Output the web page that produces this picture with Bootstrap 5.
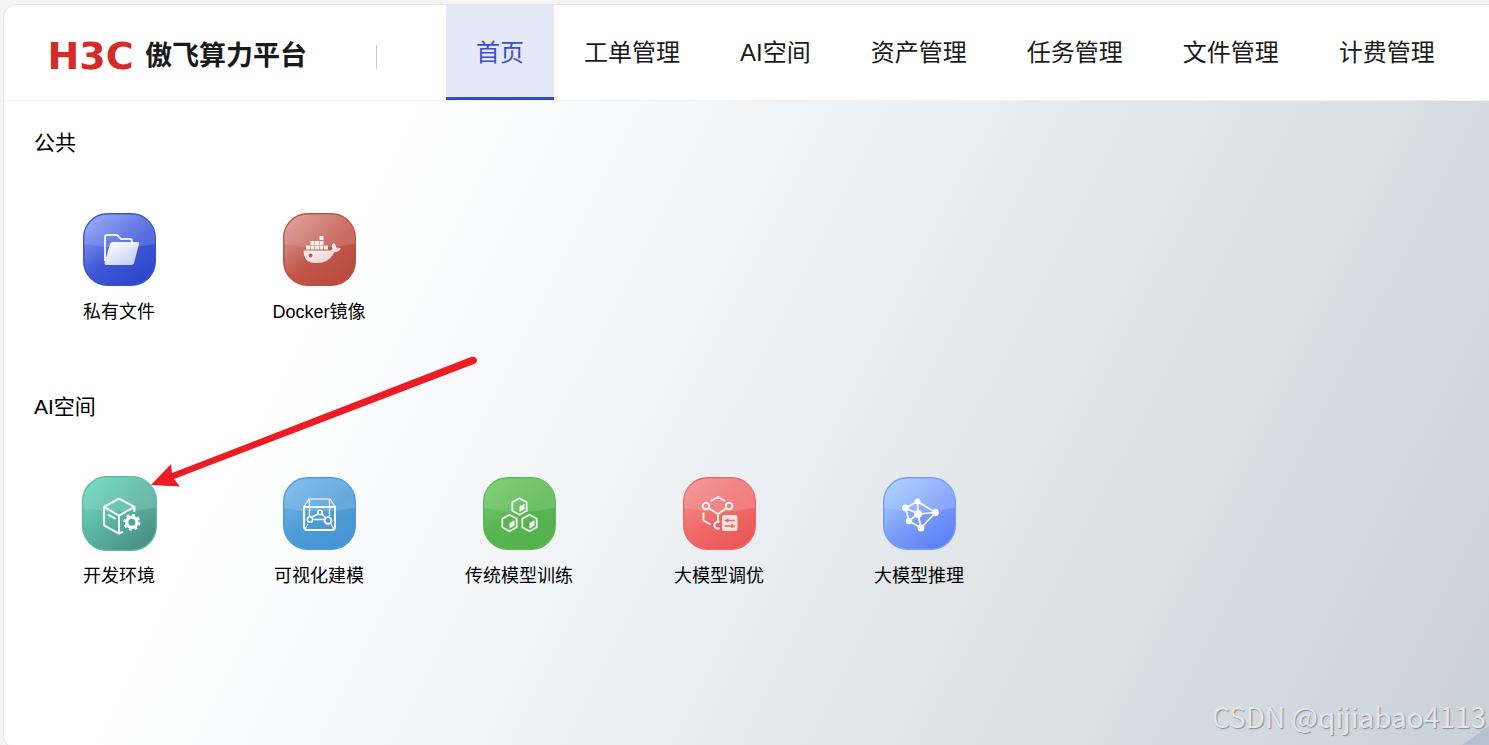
<!DOCTYPE html>
<html lang="zh-CN">
<head>
<meta charset="utf-8">
<meta name="viewport" content="width=device-width, initial-scale=1">
<title>傲飞算力平台</title>
<link href="https://cdn.jsdelivr.net/npm/bootstrap@5.3.0/dist/css/bootstrap.min.css" rel="stylesheet">
<style>
body { font-family: "Liberation Sans", "Noto Sans CJK SC", sans-serif; background: #f5f5f5; color: #000; }
.shell { border: 1px solid #e6e6e6; border-right: 0; border-radius: 14px 0 0 14px; background: #fff; margin-left: 3px; }
.topbar { border-bottom: 1px solid #f0f0f0; padding-left: 40px; height: 96px; }
.brand { color: #1a1a1a; font-size: 27px; line-height: 40px; font-weight: 700; width: 332px; gap: 8px; padding-top: 6px; }
.logo { color: #d52b26; font-family: "DejaVu Sans", sans-serif; font-size: 38px; line-height: 40px; width: 93px; text-align: center; }
.rule { width: 1px; height: 24px; background: #c8c8c8; margin-top: 8px; }
.menu { margin-left: 69px; }
.menu .nav-link { color: #1a1a1a; font-size: 24px; line-height: 36px; padding: 30px 30px 26px; border-radius: 0; border-bottom: 3px solid transparent; height: 95px; white-space: nowrap; }
.menu .nav-link.active { color: #3850d0; background: #e5e8f7; border-bottom-color: #3349c5; }
.board { background: linear-gradient(117deg, #fff 0%, #fff 22%, #f6f8f9 36%, #e9edf1 55%, #dfe3e6 69%, #dadfe3 77%, #d8dde5 79%, #cfd6de 91%, #c8d0d8 100%); border-bottom-left-radius: 14px; }
.group { height: 264px; padding: 26px 15px 0; }
.group h2 { font-size: 21px; line-height: 32px; font-weight: 400; margin: 0 0 54px 15px; }
.tile { width: 200px; flex: none; color: #000; font-size: 18px; line-height: 28px; gap: 12px; }
.tile-art { width: 73px; height: 73px; }
.tile.hovered .tile-art { transform: scale(1.03); }
.arrow { left: 130px; top: -122px; }
.watermark { right: 3px; bottom: 12px; font-family: "Noto Sans CJK SC", sans-serif; font-size: 28px; line-height: 40px; color: #e4e6e9; text-shadow: 1px 1px 1px #85898e; }
.fold { right: 0; bottom: 0; width: 32px; height: 22px; background: linear-gradient(145deg, transparent 50%, #b6c1cd 51%); }
</style>
</head>
<body>
<div class="shell d-flex flex-column min-vh-100 mt-1 overflow-hidden">
  <header class="topbar d-flex align-items-center">
    <div class="brand d-flex align-items-center flex-shrink-0"><span class="logo">H3C</span><span>傲飞算力平台</span></div>
    <div class="rule flex-shrink-0"></div>
    <ul class="menu nav flex-nowrap">
      <li><a class="nav-link active" href="#" aria-current="page">首页</a></li>
      <li><a class="nav-link" href="#">工单管理</a></li>
      <li><a class="nav-link" href="#">AI空间</a></li>
      <li><a class="nav-link" href="#">资产管理</a></li>
      <li><a class="nav-link" href="#">任务管理</a></li>
      <li><a class="nav-link" href="#">文件管理</a></li>
      <li><a class="nav-link" href="#">计费管理</a></li>
    </ul>
  </header>
  <svg width="0" height="0" class="position-absolute" aria-hidden="true">
    <defs>
      <linearGradient id="blue" x2=".7" y2="1"><stop stop-color="#a0b2f8"/><stop offset=".6" stop-color="#3f59d8"/><stop offset="1" stop-color="#2f46cc"/></linearGradient>
      <linearGradient id="brick" x2=".8" y2="1"><stop stop-color="#e3aaa5"/><stop offset=".6" stop-color="#c05548"/><stop offset="1" stop-color="#b84b40"/></linearGradient>
      <linearGradient id="teal" x2=".8" y2="1"><stop stop-color="#73e0c4"/><stop offset=".5" stop-color="#5cb8a4"/><stop offset="1" stop-color="#488e83"/></linearGradient>
      <linearGradient id="sky" x2=".6" y2="1"><stop stop-color="#85c0f0"/><stop offset=".6" stop-color="#4f9dd6"/><stop offset="1" stop-color="#4795d2"/></linearGradient>
      <linearGradient id="green" x2=".6" y2="1"><stop stop-color="#7fd277"/><stop offset=".6" stop-color="#58b550"/><stop offset="1" stop-color="#55b04e"/></linearGradient>
      <linearGradient id="coral" x2=".6" y2="1"><stop stop-color="#f29a9a"/><stop offset=".6" stop-color="#ef6c6a"/><stop offset="1" stop-color="#ea5958"/></linearGradient>
      <linearGradient id="peri" x2=".7" y2="1"><stop stop-color="#b2d9ff"/><stop offset=".6" stop-color="#7b9efa"/><stop offset="1" stop-color="#5f80f7"/></linearGradient>
      <linearGradient id="paper" x2=".9" y2="1"><stop stop-color="#fff"/><stop offset="1" stop-color="#fff" stop-opacity=".7"/></linearGradient>
      <linearGradient id="shine" x2=".6" y2="1"><stop stop-color="#fff" stop-opacity=".03"/><stop offset="1" stop-color="#fff" stop-opacity=".15"/></linearGradient>
      <path id="gloss" d="M1 33V25C1 10 10 1 25 1H48C63 1 72 10 72 25V31Q37 38 1 31Z" fill="url(#shine)"/>
      <g id="hex"><path d="M0-8.3 7.2-4.2V4.2L0 8.3-7.2 4.2V-4.2Z" fill="none" stroke="#fff" stroke-width="1.8"/><path d="M0 0 5-2.7V2.6L0 5.4Z" fill="#fff"/></g>
    </defs>
  </svg>
  <main class="board flex-grow-1 position-relative">
    <section class="group">
      <h2>公共</h2>
      <div class="d-flex">
        <a href="#" class="tile d-flex flex-column align-items-center text-decoration-none">
          <svg class="tile-art" viewBox="0 0 73 73"><rect x=".7" y=".7" width="71.6" height="71.6" rx="24" fill="url(#blue)" stroke="#3750cf" stroke-width="1.4"/><use href="#gloss"/>
            <path d="M22 48V24Q22 22 24 22H34L38 26H47Q49 26 49 29V31" fill="none" stroke="#e9edff" stroke-width="2"/><path d="M30 29H54.500Q56.500 29 56 31L51 50Q50.500 52 48.500 52H23.500Q21 52 21.600 49.500L27 31Q27.600 29 30 29Z" fill="url(#paper)"/></svg>
          <span>私有文件</span></a>
        <a href="#" class="tile d-flex flex-column align-items-center text-decoration-none">
          <svg class="tile-art" viewBox="0 0 73 73"><rect x=".7" y=".7" width="71.6" height="71.6" rx="24" fill="url(#brick)" stroke="#b8503f" stroke-width="1.4"/><use href="#gloss"/>
            <path d="M36.500 23h4v4h-4zM27.500 28h4v4h-4zM32 28h4v4h-4zM36.500 28h4v4h-4zM23 32.500h4v4h-4zM27.500 32.500h4v4h-4zM32 32.500h4v4h-4zM36.500 32.500h4v4h-4zM41 32.500h4v4h-4z" fill="#fff" opacity=".88"/><path d="M20.500 37.500H45Q49 37.500 49.500 35.500 47.500 32.500 50.500 30 53.500 32 53 34.500 55.500 34 58 35.500 56 39 51.500 39 46.500 50 34 50 20.500 51 20.500 37.500Z" fill="url(#paper)"/><circle cx="27.500" cy="42.500" r="2" fill="#bd594e"/></svg>
          <span>Docker镜像</span></a>
      </div>
    </section>
    <section class="group">
      <h2>AI空间</h2>
      <div class="d-flex">
        <a href="#" class="tile hovered position-relative d-flex flex-column align-items-center text-decoration-none">
          <svg class="tile-art" viewBox="0 0 73 73"><rect x=".7" y=".7" width="71.6" height="71.6" rx="24" fill="url(#teal)" stroke="#55bba3" stroke-width="1.4"/><use href="#gloss"/>
            <g fill="none" stroke="#fff" stroke-width="2" stroke-linejoin="round" stroke-linecap="round" opacity=".93"><path d="M51 34V30L36 22 21.500 30V48L36 56V38.500L21.500 30M36 38.500 51 30M26 38 32 41.200M36 56 39 54.500"/></g>
            <circle cx="48.500" cy="45" r="5" fill="none" stroke="#fff" stroke-width="3.200"/><circle cx="48.500" cy="45" r="7.200" fill="none" stroke="#fff" stroke-width="2.200" stroke-dasharray="2.900 2.755"/></svg>
          <span>开发环境</span>
          <svg class="arrow position-absolute" width="335" height="140" viewBox="0 0 335 140" aria-hidden="true"><path d="M2 130 22 109 23 118 322 2Q327 1 328 5 328 8 325 9L25 124 31 131.500Z" fill="#ed1c24"/></svg></a>
        <a href="#" class="tile d-flex flex-column align-items-center text-decoration-none">
          <svg class="tile-art" viewBox="0 0 73 73"><rect x=".7" y=".7" width="71.6" height="71.6" rx="24" fill="url(#sky)" stroke="#4b9bd9" stroke-width="1.4"/><use href="#gloss"/>
            <g fill="none" stroke="#fff"><path d="M21 30H52V50Q52 53 49 53H24Q21 53 21 50Z" stroke-width="2" opacity=".92"/><path d="M21 29.500 26 22H47L52 29.500M26.500 23V39M46.500 23V39M25 47 22 52M48 47 51 52" stroke-width="1.200"/><path d="M29 40 35 37M39 37 42.500 41M31 42.500H41" stroke-width="1.600"/><circle cx="27" cy="42.500" r="2.700" stroke-width="1.600"/><circle cx="37" cy="35.500" r="2.200" stroke-width="1.600"/><circle cx="45" cy="43.500" r="3.400" stroke-width="1.800"/></g></svg>
          <span>可视化建模</span></a>
        <a href="#" class="tile d-flex flex-column align-items-center text-decoration-none">
          <svg class="tile-art" viewBox="0 0 73 73"><rect x=".7" y=".7" width="71.6" height="71.6" rx="24" fill="url(#green)" stroke="#5cb956" stroke-width="1.4"/><use href="#gloss"/>
            <g opacity=".93"><use href="#hex" x="36.500" y="29.500"/><use href="#hex" x="26.500" y="46"/><use href="#hex" x="46.500" y="46"/></g></svg>
          <span>传统模型训练</span></a>
        <a href="#" class="tile d-flex flex-column align-items-center text-decoration-none">
          <svg class="tile-art" viewBox="0 0 73 73"><rect x=".7" y=".7" width="71.6" height="71.6" rx="24" fill="url(#coral)" stroke="#eb6765" stroke-width="1.4"/><use href="#gloss"/>
            <g fill="none" stroke="#fff" stroke-width="1.900" opacity=".92"><path d="M27.500 24 35 20 42 24M26 31.500 35 37 43 31.500M35 37V44M20.500 35.500V43.500L27.500 47.500"/><circle cx="23" cy="29" r="3.300"/><circle cx="46" cy="29" r="3.300"/><path d="M36.500 45.500A3.300 3.300 0 1 0 36.500 51"/></g>
            <rect x="39" y="38" width="15.500" height="16" rx="2.500" fill="#fff" opacity=".82"/><path d="M41.500 43.500H52M41.500 49H52" stroke="#ec6967" stroke-width="1.400"/><path d="M44.500 41.800v3.400M49 47.300v3.400" stroke="#ec6967" stroke-width="2"/></svg>
          <span>大模型调优</span></a>
        <a href="#" class="tile d-flex flex-column align-items-center text-decoration-none">
          <svg class="tile-art" viewBox="0 0 73 73"><rect x=".7" y=".7" width="71.6" height="71.6" rx="24" fill="url(#peri)" stroke="#779af2" stroke-width="1.4"/><use href="#gloss"/>
            <path d="M22.500 31 34.500 24.500 52.500 35.500 38 51 26 44ZM22.500 31 35 37 52.500 35.500M34.500 24.500 35 37 38 51M35 37 26 44" fill="none" stroke="#fff" stroke-width="1.700"/><g fill="#fff"><circle cx="22.500" cy="31" r="3.400"/><circle cx="34.500" cy="24.500" r="3"/><circle cx="35" cy="37" r="4"/><circle cx="26" cy="44" r="3.200"/><circle cx="38" cy="51" r="3.400"/><circle cx="52.500" cy="35.500" r="3.400"/></g></svg>
          <span>大模型推理</span></a>
      </div>
    </section>
    <div class="fold position-absolute"></div>
    <div class="watermark position-absolute">CSDN @qijiabao4113</div>
  </main>
</div>
<script src="https://cdn.jsdelivr.net/npm/bootstrap@5.3.0/dist/js/bootstrap.bundle.min.js"></script>
</body>
</html>
